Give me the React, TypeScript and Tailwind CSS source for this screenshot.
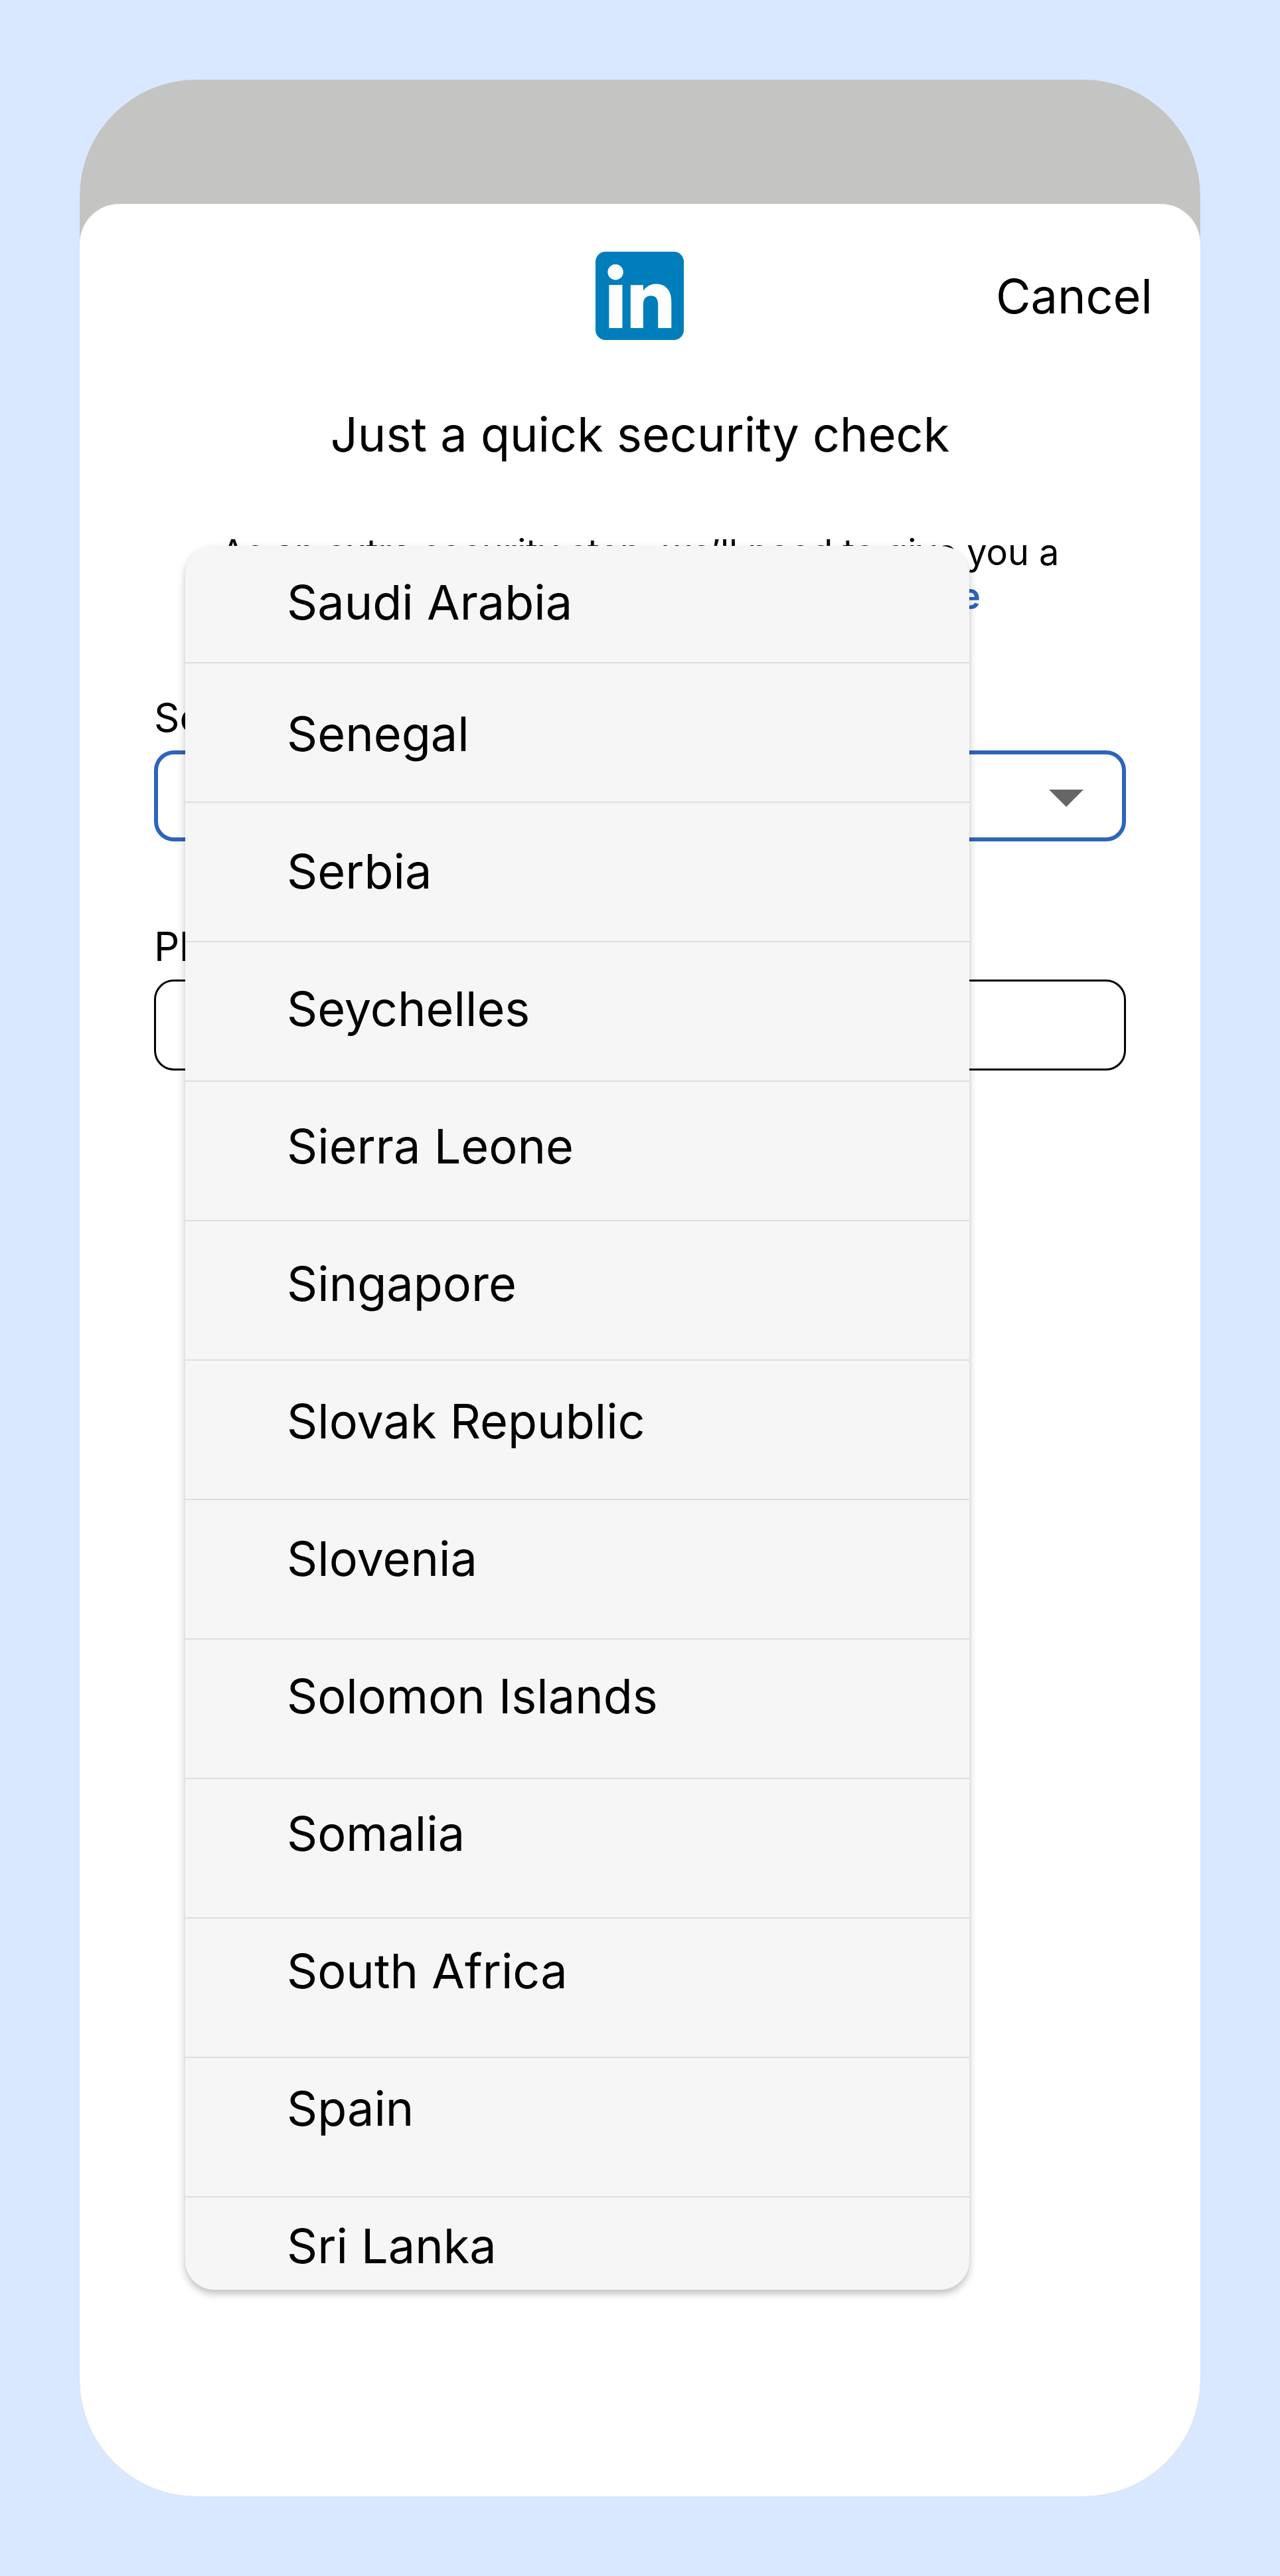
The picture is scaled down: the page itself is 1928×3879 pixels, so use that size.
import { useState } from "react";

const COUNTRIES = [
  "Saudi Arabia", "Senegal", "Serbia", "Seychelles", "Sierra Leone", "Singapore", "Slovak Republic",
  "Slovenia", "Solomon Islands", "Somalia", "South Africa", "Spain", "Sri Lanka",
];

function LinkedInLogo() {
  return (
    <svg viewBox="0 0 398 398" className="size-[133px]" role="img" aria-label="LinkedIn">
      <rect width="398" height="398" rx="45" fill="#007ebb" />
      <circle cx="90" cy="92" r="35" fill="#fff" />
      <rect x="61" y="150" width="60" height="194" fill="#fff" />
      <path d="M158 150H215V176C225 161 244 145 273 145C320 145 342 179 342 226V344H282V239C282 213 272 198 250 198C227 198 215 213 215 239V344H158Z" fill="#fff" />
    </svg>
  );
}

function CountryMenu({ onPick }: { onPick: (country: string) => void }) {
  return (
    <div className="absolute left-[159px] right-[348px] top-[515px] h-[2626px] overflow-hidden rounded-[44px] bg-[#f6f6f6] shadow-[0_6px_12px_rgba(0,0,0,0.25)]">
      {/* divider rules sit behind the options */}
      <div aria-hidden="true" className="absolute inset-0">
        {COUNTRIES.slice(1).map((c) => (
          <div key={c} className="h-[210px] border-b-2 border-[#dedede] first:h-[177px]" />
        ))}
      </div>
      <ul className="relative">
        {COUNTRIES.map((c) => (
          <li key={c} className="h-[207px] first:h-[179px] first:pb-2.5">
            <button type="button" onClick={() => onPick(c)} className="flex h-full w-full items-center pl-[153px] text-left text-[72px] leading-[88px]">
              {c}
            </button>
          </li>
        ))}
      </ul>
    </div>
  );
}

export default function App() {
  const [country, setCountry] = useState("");
  const [phone, setPhone] = useState("");
  return (
    <main className="flex min-h-screen bg-[#d9e7ff] p-[120px] font-['Inter',sans-serif] text-black">
      <div className="flex flex-1 flex-col overflow-hidden rounded-[176px] bg-[#c4c4c2] pt-[187px]">
        <section className="relative flex-1 rounded-t-[60px] bg-white pt-[72px]">
          <header className="grid grid-cols-3 items-center px-[72px]">
            <div className="col-start-2 justify-self-center">
              <LinkedInLogo />
            </div>
            <button type="button" className="justify-self-end text-[72px] leading-[88px]">Cancel</button>
          </header>

          <h1 className="mt-[98px] text-center text-[72px] leading-[88px]">Just a quick security check</h1>
          <p className="mx-auto mt-[101px] max-w-[1300px] text-center text-[54px] leading-[66px]">
            As an extra security step, we’ll need to give you a verification code to register.{" "}
            <a href="#learn" className="font-semibold text-[#2d64bc]">Learn more</a>
          </p>

          <form className="mt-[113px] flex flex-col gap-[122px] px-28">
            <div className="flex flex-col gap-3.5">
              <label htmlFor="country" className="text-[60px] leading-[72px]">Select country code</label>
              <div className="relative">
                <select id="country" value={country} onChange={(e) => setCountry(e.target.value)}
                  className="block h-[137px] w-full appearance-none rounded-[30px] border-6 border-[#2d64bc] bg-white px-12 text-[60px]">
                  <option value=""></option>
                  {COUNTRIES.map((c) => <option key={c}>{c}</option>)}
                </select>
                <svg viewBox="0 0 52 26" aria-hidden="true" className="pointer-events-none absolute right-16 top-[59px] h-[26px] w-[52px]">
                  <path d="M0 0H52L26 26Z" fill="#666" />
                </svg>
              </div>
            </div>
            <div className="flex flex-col gap-3.5">
              <label htmlFor="phone" className="text-[60px] leading-[72px]">Phone number</label>
              <input id="phone" type="tel" value={phone} onChange={(e) => setPhone(e.target.value)}
                className="block h-[137px] w-full rounded-[30px] border-3 border-black bg-white px-12 text-[60px]" />
            </div>
          </form>

          <CountryMenu onPick={setCountry} />
        </section>
      </div>
    </main>
  );
}
